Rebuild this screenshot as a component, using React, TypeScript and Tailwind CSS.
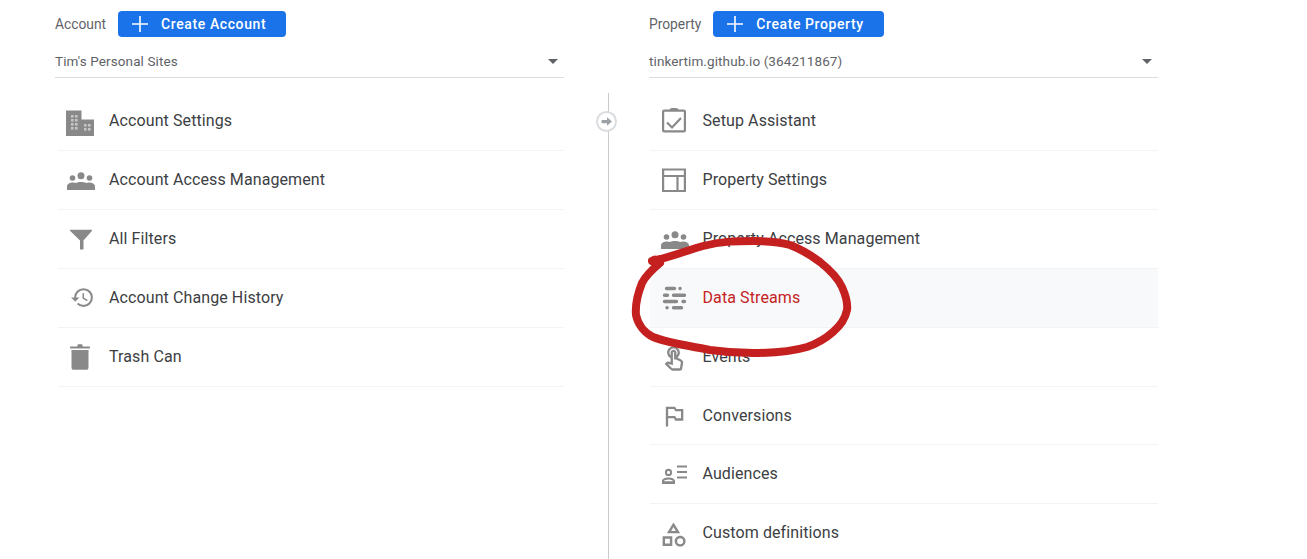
import type { ReactNode } from 'react';

interface Item {
  label: string;
  icon: ReactNode;
  active?: boolean;
}

function Icon({ d, size = 24, className = '' }: { d: string; size?: number; className?: string }) {
  return (
    <svg width={size} height={size} viewBox="0 0 24 24" fill="currentColor" className={className}>
      <path d={d} />
    </svg>
  );
}

function GroupsIcon({ className = '' }: { className?: string }) {
  return (
    <svg width="28" height="18" viewBox="0 0 28 18" fill="currentColor" className={className}>
      <circle cx="5.500" cy="6" r="2.800" />
      <circle cx="14" cy="3.800" r="3.500" />
      <circle cx="22.500" cy="6" r="2.800" />
      <path d="M0 18v-3.500C0 12 3 10.500 6 10.500c1 0 2 .2 3 .5 1.500-.8 3-1 5-1s3.500.2 5 1c1-.3 2-.5 3-.5 3 0 6 1.500 6 4V18z" />
    </svg>
  );
}

function BuildingIcon() {
  const windows = [
    [5, 5], [9, 5], [5, 9], [9, 9], [5, 13], [9, 13], [5, 17], [9, 17],
    [18, 14], [22, 14], [18, 18], [22, 18],
  ];
  return (
    <svg width="28" height="28" viewBox="0 0 28 28" className="translate-y-[3px]">
      <path d="M0 0.500h15.500v9H28V26H0z" fill="currentColor" />
      {windows.map(([x, y]) => (
        <rect key={`${x}-${y}`} x={x} y={y} width="2.600" height="2.600" fill="#c6c6c6" />
      ))}
    </svg>
  );
}

const accountItems: Item[] = [
  { label: 'Account Settings', icon: <BuildingIcon /> },
  { label: 'Account Access Management', icon: <GroupsIcon className="ml-px translate-y-[1px]" /> },
  {
    label: 'All Filters',
    icon: (
      <Icon
        size={30}
        d="M3.600 4.600h16.800c.4 0 .6.4.4.7L14 13.200V20c0 .3-.2.4-.4.4h-1.900c-.3 0-.5-.1-.5-.4v-6.800L3.200 5.300c-.2-.3 0-.7.4-.7z"
      />
    ),
  },
  {
    label: 'Account Change History',
    icon: (
      <Icon
        size={25}
        className="ml-[4px]"
        d="M13 3a9 9 0 0 0-9 9H1l3.890 3.890.07.14L9 12H6c0-3.870 3.130-7 7-7s7 3.130 7 7-3.130 7-7 7c-1.930 0-3.680-.79-4.940-2.060l-1.420 1.420A8.954 8.954 0 0 0 13 21a9 9 0 0 0 0-18zm-1 5v5l4.280 2.540.72-1.210-3.500-2.080V8H12z"
      />
    ),
  },
  {
    label: 'Trash Can',
    icon: (
      <Icon
        size={34}
        className="-ml-[3px]"
        d="M6 19c0 1.100.4 2 1 2h10c.6 0 1-.9 1-2V7H6v12zM19 4.500h-5l-.5-1.500h-3l-.5 1.500H5v1.500h14V4.500z"
      />
    ),
  },
];

const propertyItems: Item[] = [
  {
    label: 'Setup Assistant',
    icon: (
      <svg width="28" height="28" viewBox="0 0 28 28" fill="none" stroke="currentColor" strokeWidth="2.200" className="ml-[3px]">
        <rect x="1.100" y="3.600" width="21.800" height="20.800" rx="1" />
        <path d="M8.500 3.600c0-1 .8-1.600 1.600-1.600h3.800c.8 0 1.600.6 1.600 1.600" />
        <path d="M5 15.500l5 5 9-9.500" />
      </svg>
    ),
  },
  {
    label: 'Property Settings',
    icon: (
      <svg width="28" height="28" viewBox="0 0 28 28" fill="none" stroke="currentColor" strokeWidth="2.200" className="ml-[3px]">
        <path d="M1.100 3.500h21.800v21.500H1.100zM1.100 10h21.800M15.500 10v15" />
      </svg>
    ),
  },
  { label: 'Property Access Management', icon: <GroupsIcon className="ml-[2px] translate-y-[1px]" /> },
  {
    label: 'Data Streams',
    active: true,
    icon: (
      <svg width="28" height="28" viewBox="0 0 28 28" fill="none" stroke="currentColor" strokeWidth="3.400" strokeLinecap="round" className="ml-[3px]">
        <path d="M4.500 4.500h8M18 4.500h.1M2.500 11.200h3M11.500 11.200h11M2.500 17.500h12M21 17.500h1.500M5 23.800h.1M11.500 23.800h8" />
      </svg>
    ),
  },
  {
    label: 'Events',
    icon: (
      <Icon
        size={28}
        className="ml-px translate-y-[2px]"
        d="M18.190 12.440l-3.240-1.620c1.290-1 2.120-2.560 2.120-4.320 0-3.030-2.470-5.500-5.500-5.500s-5.500 2.470-5.500 5.500c0 2.130 1.220 3.980 3 4.890v3.260c-2.150-.46-2.020-.44-2.260-.44-.53 0-1.030.21-1.410.59L4 16.220l5.090 5.090c.43.44 1.030.69 1.650.69h6.300c.98 0 1.810-.7 1.970-1.670l.8-4.710c.22-1.300-.43-2.580-1.620-3.180zm-.35 2.850l-.8 4.710h-6.300c-.09 0-.17-.04-.24-.1l-3.680-3.680 4.250.89V6.500c0-.28.22-.5.5-.5s.5.22.5.5v6h1.760l3.460 1.730c.4.2.62.63.55 1.060zM8.070 6.500c0-1.930 1.570-3.500 3.500-3.500s3.500 1.570 3.500 3.500c0 .95-.38 1.810-1 2.440V6.500c0-1.380-1.120-2.500-2.500-2.500s-2.500 1.120-2.500 2.500v2.440c-.62-.63-1-1.490-1-2.440z"
      />
    ),
  },
  {
    label: 'Conversions',
    icon: <Icon size={28} className="ml-px" d="M14 6l-1-2H5v17h2v-7h5l1 2h7V6h-6zm4 8h-4l-1-2H7V6h5l1 2h5v6z" />,
  },
  {
    label: 'Audiences',
    icon: (
      <svg width="28" height="28" viewBox="0 0 28 28" fill="currentColor" className="ml-[2px]">
        <path d="M16 5.500h10v2H16zM16 11h10v2H16zM16 16.500h10v2H16z" />
        <path
          fillRule="evenodd"
          d="M7.500 8.800a3.600 3.600 0 1 1 0 7.200 3.600 3.600 0 0 1 0-7.200zm0 2a1.600 1.600 0 1 0 0 3.200 1.600 1.600 0 0 0 0-3.200zM7.500 17.500c3.500 0 6.500 1.500 6.500 3.500v3H1v-3c0-2 3-3.500 6.500-3.500zm0 2c-2.500 0-4.300 .8-4.500 1.800h9c-.2-1-2-1.800-4.500-1.800z"
        />
      </svg>
    ),
  },
  {
    label: 'Custom definitions',
    icon: (
      <Icon
        size={29}
        className="translate-y-[1px]"
        d="M12 2l-5.500 9h11L12 2zm0 3.840L13.930 9h-3.870L12 5.840zM17.500 13c-2.490 0-4.500 2.010-4.500 4.500s2.010 4.500 4.500 4.500 4.500-2.010 4.500-4.500-2.010-4.500-4.500-4.500zm0 7a2.500 2.500 0 0 1 0-5 2.500 2.500 0 0 1 0 5zM3 21.500h8v-8H3v8zm2-6h4v4H5v-4z"
      />
    ),
  },
];

function Header({ title, action, selected }: { title: string; action: string; selected: string }) {
  return (
    <>
      <div className="flex items-center h-[26px]">
        <span className="text-[13.800px] text-[#5f6368] mr-3">{title}</span>
        <button className="h-[26px] flex items-center pl-[12px] pr-5 rounded-[4px] bg-[#1a73e8] text-white text-[14px] font-medium tracking-[0.6px]">
          <svg width="20" height="20" viewBox="0 0 20 20" fill="none" stroke="currentColor" strokeWidth="1.600" className="mr-[11px]">
            <path d="M10 2v16M2 10h16" />
          </svg>
          {action}
        </button>
      </div>
      <div className="mt-[11px] h-[30px] flex items-start justify-between border-b border-[#dadce0] pr-[6px] text-[13.500px] text-[#5f6368]">
        <span className="leading-[26px] tracking-[0.1px]">{selected}</span>
        <span className="mt-[11px] w-0 h-0 border-x-[5px] border-x-transparent border-t-[5px] border-t-[#5f6368]" />
      </div>
    </>
  );
}

function Row({ item, cell }: { item: Item; cell: string }) {
  return (
    <div className={`h-[58.85px] flex items-center border-b border-[#f1f3f4] ${item.active ? 'bg-[#f8f9fa]' : ''}`}>
      <div className={`${cell} flex items-center text-[#898989]`}>{item.icon}</div>
      <span className={`text-[16px] tracking-[0.1px] ${item.active ? 'text-[#c5221f]' : 'text-[#3c4043]'}`}>
        {item.label}
      </span>
    </div>
  );
}

function Column({ title, action, selected, items, inset, cell }: { title: string; action: string; selected: string; items: Item[]; inset: string; cell: string }) {
  return (
    <div className="w-[509px] shrink-0">
      <Header title={title} action={action} selected={selected} />
      <div className={`mt-[14.400px] ${inset}`}>
        {items.map((item) => (
          <Row key={item.label} item={item} cell={cell} />
        ))}
      </div>
    </div>
  );
}

export default function App() {
  return (
    <div
      className="relative w-[1307px] h-[559px] overflow-hidden bg-white flex pt-[11px] pl-[55px]"
      style={{ fontFamily: 'Roboto, sans-serif' }}
    >
      <Column title="Account" action="Create Account" selected="Tim's Personal Sites" items={accountItems} inset="ml-[3px]" cell="w-[51px] pl-[8px]" />

      {/* divider between the two columns */}
      <div className="w-[85px] shrink-0 relative">
        <div className="absolute left-[44px] top-[82px] bottom-0 w-px bg-[#c8cacc]" />
        <div className="absolute left-[32px] top-[100px] w-[21px] h-[21px] rounded-full bg-white border-2 border-[#dadce0] flex items-center justify-center text-[#9aa0a6]">
          <svg width="13" height="13" viewBox="0 0 24 24" fill="currentColor">
            <path d="M13 4l9 8-9 8v-5H3V9h10V4z" />
          </svg>
        </div>
      </div>

      <Column title="Property" action="Create Property" selected="tinkertim.github.io (364211867)" items={propertyItems} inset="ml-px" cell="w-[52.500px] pl-[9px]" />

      {/* hand drawn annotation */}
      <svg className="absolute left-0 top-0 pointer-events-none" width="1307" height="559" fill="none">
        <path
          d="M652 261 C668 258 688 250 703 246 C722 241 738 241 753 241 C768 241 780 242 790 245 C803 250 812 256 820 262 C830 270 838 278 842 287 C846 296 848 303 847 310 C845 320 840 326 833 332 C825 339 816 344 807 347 C790 352 772 353 753 353 C738 353 724 352 710 350 C690 346 668 343 653 337 C645 333 638 325 636 315 C635 304 638 293 642 283 C646 275 654 268 660 263"
          stroke="#c4201f"
          strokeWidth="8"
          strokeLinecap="round"
        />
        <circle cx="655" cy="261" r="5.500" fill="#c4201f" />
      </svg>
    </div>
  );
}
